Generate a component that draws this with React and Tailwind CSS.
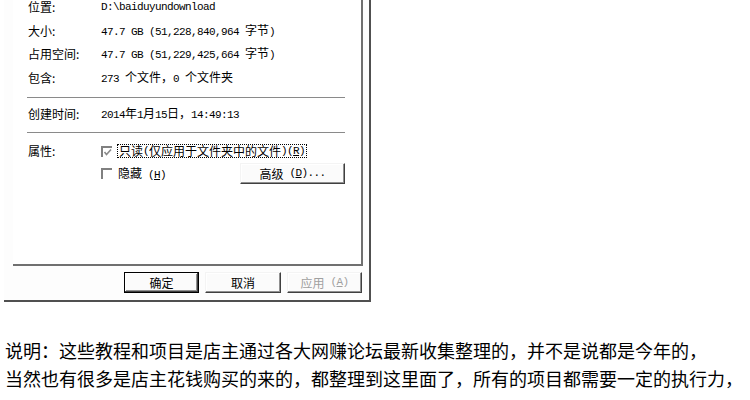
import React from "react";

const cjk = '"Noto Sans CJK SC", "Liberation Sans", sans-serif';
const mono = "font-['Liberation_Mono',monospace] text-[11px] tracking-[-0.6px] whitespace-pre";

// ASCII runs get the half-width mono face, the rest stays CJK
function Mix({ text }) {
  const parts = text.match(/[\x20-\x7e]+|[^\x20-\x7e]+/g) || [];
  return parts.map((p, i) =>
    /^[\x20-\x7e]+$/.test(p) ? (
      <span key={i} className={mono}>
        {p}
      </span>
    ) : (
      <span key={i} className="text-[12px]">{p}</span>
    )
  );
}

function Row({ label, value, h = "h-[24px]" }) {
  return (
    <div className={`flex items-center ${h}`}>
      <div className="w-[88px] pl-[15px] text-[12px]">{label}</div>
      <div className="flex items-baseline">
        <Mix text={value} />
      </div>
    </div>
  );
}

function Btn({ children, def, disabled, className = "" }) {
  return (
    <div
      className={`h-[21px] flex items-center justify-center text-[12px] bg-[#fbfbfb] ${
        def
          ? "border border-black shadow-[inset_-1px_-1px_0_#404040,inset_1px_1px_0_#ffffff,inset_-2px_-2px_0_#909090]"
          : "border-t border-l border-[#f4f4f4] border-r border-b border-r-[#404040] border-b-[#404040] shadow-[inset_-1px_-1px_0_#909090,inset_1px_1px_0_#ffffff]"
      } ${disabled ? "text-[#a0a0a0]" : "text-black"} ${className}`}
    >
      {children}
    </div>
  );
}

export default function App() {
  return (
    <div
      className="relative w-[750px] h-[400px] bg-white overflow-hidden text-black"
      style={{ fontFamily: cjk }}
    >
      {/* dialog */}
      <div className="ml-[4px] w-[367px] h-[307px] border-r-2 border-b-2 border-r-[#505050] border-b-[#505050] bg-[#fdfdfd]">
        {/* tab page */}
        <div className="ml-[9px] w-[350px] h-[271px] border-r-2 border-b-2 border-r-[#707070] border-b-[#707070] bg-white">
          <div className="-mt-[5px]">
            <Row label="位置:" value="D:\baiduyundownload" />
            <Row label="大小:" value="47.7 GB (51,228,840,964 字节)" h="h-[23px]" />
            <Row label="占用空间:" value="47.7 GB (51,229,425,664 字节)" />
            <Row label="包含:" value="273 个文件，0 个文件夹" />
          </div>
          <div className="ml-[14px] mt-[7px] w-[318px] border-t border-[#8a8a8a]" />
          <div className="mt-[4px]">
            <Row label="创建时间:" value="2014年1月15日，14:49:13" />
          </div>
          <div className="ml-[14px] mt-[6px] w-[318px] border-t border-[#8a8a8a]" />

          <div className="mt-[6px] flex">
            <div className="w-[88px] pl-[15px] text-[12px] h-[24px] flex items-center">属性:</div>
            <div className="flex-1 pr-[16px]">
              <div className="h-[24px] flex items-center">
                <div className="relative w-[11px] h-[11px] border-t-2 border-l-2 border-[#808080]">
                  <svg viewBox="0 0 9 9" className="absolute left-[0px] top-[0px] w-[9px] h-[9px]">
                    <path d="M1.5 4 L3.5 6.5 L8 1.5" fill="none" stroke="#8a8a8a" strokeWidth="1.6" />
                  </svg>
                </div>
                <div className="ml-[5px] border border-dotted border-black px-[1px] leading-[12px] h-[14px] flex items-center">
                  <span className="text-[12px]">只读</span>
                  <span className={mono}>(</span>
                  <span className="text-[12px]">仅应用于文件夹中的文件</span>
                  <span className={mono}>)(<u>R</u>)</span>
                </div>
              </div>
              <div className="h-[21px] flex items-center">
                <div className="w-[11px] h-[11px] border-t-2 border-l-2 border-[#808080]" />
                <div className="ml-[6px] text-[12px]">
                  隐藏<span className={mono}> (<u>H</u>)</span>
                </div>
                <div className="flex-1" />
                <Btn className="w-[105px] h-[21px]">
                  高级<span className={mono}> (<u>D</u>)...</span>
                </Btn>
              </div>
            </div>
          </div>
        </div>

        {/* dialog buttons */}
        <div className="mt-[6px] flex justify-end gap-[6px] pr-[7px]">
          <Btn def className="w-[75px]">确定</Btn>
          <Btn className="w-[76px]">取消</Btn>
          <Btn disabled className="w-[75px]">
            应用<span className={mono}> (<u>A</u>)</span>
          </Btn>
        </div>
      </div>

      {/* description */}
      <div className="mt-[34px] pl-[5px] text-[18px] leading-[28px] font-normal whitespace-nowrap">
        <p>说明：这些教程和项目是店主通过各大网赚论坛最新收集整理的，并不是说都是今年的，</p>
        <p>当然也有很多是店主花钱购买的来的，都整理到这里面了，所有的项目都需要一定的执行力，</p>
      </div>
    </div>
  );
}
